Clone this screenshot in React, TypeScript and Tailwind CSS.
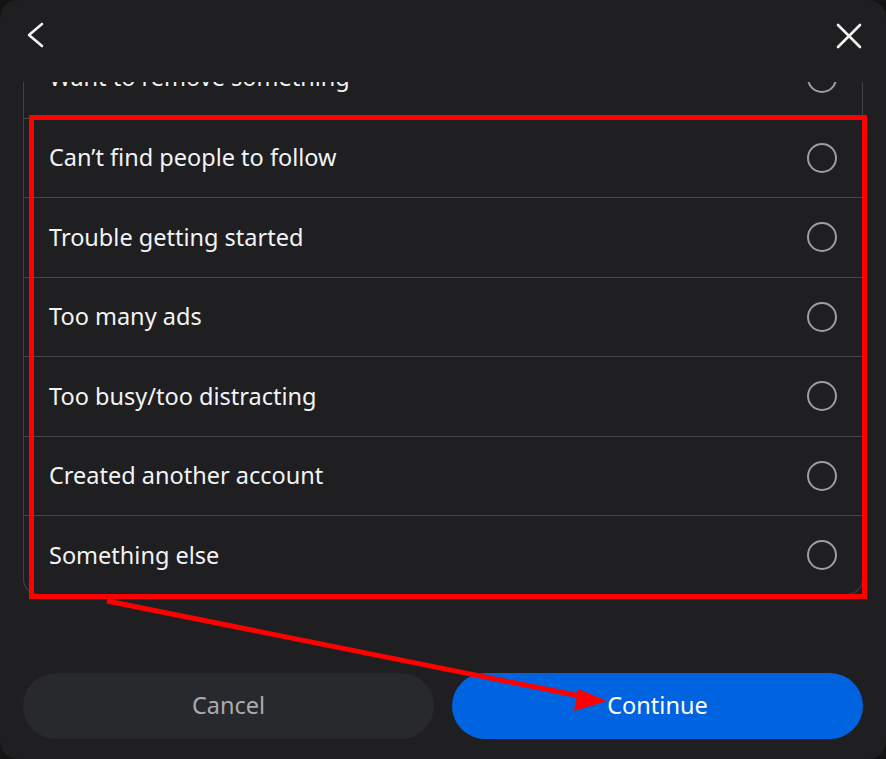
import React from 'react';

const reasons = [
  'Want to remove something',
  'Can’t find people to follow',
  'Trouble getting started',
  'Too many ads',
  'Too busy/too distracting',
  'Created another account',
  'Something else',
];

function Radio() {
  return <span className="block w-[30px] h-[30px] rounded-full border-[2.5px] border-[#9c9ea3] shrink-0" />;
}

export default function App() {
  return (
    <div className="w-[886px] h-[759px] bg-[#141415] relative overflow-hidden" style={{ fontFamily: '"Noto Sans", "Open Sans", sans-serif' }}>
      <div className="w-full h-full bg-[#1f1f21] rounded-[18px] flex flex-col">
        {/* header */}
        <div className="h-[72px] shrink-0 flex items-center justify-between px-[24px]">
          <button className="w-[24px] h-[24px] flex items-center justify-center">
            <svg width="24" height="28" viewBox="0 0 24 28" fill="none" stroke="#f2f2f2" strokeWidth="2.6" strokeLinecap="round" strokeLinejoin="round">
              <path d="M18 2 L5 13 L18 24" />
            </svg>
          </button>
          <button className="w-[26px] h-[26px] flex items-center justify-center">
            <svg width="26" height="26" viewBox="0 0 26 26" fill="none" stroke="#f2f2f2" strokeWidth="2.6" strokeLinecap="round">
              <path d="M2 2 L24 24 M24 2 L2 24" />
            </svg>
          </button>
        </div>

        {/* list, scrolled so the first reason is mostly hidden */}
        <div className="mt-[10px] mx-[23px] h-[513px] overflow-hidden border-x border-b border-[#3f4146] rounded-b-[16px]">
          <div className="-mt-[44px]">
            {reasons.map((r, i) => (
              <div
                key={r}
                className={`h-[79.5px] flex items-center justify-between pl-[25px] pr-[25px] ${i > 0 ? 'border-t border-[#45474c]' : ''}`}
              >
                <span className="text-[23.5px] text-[#f2f3f5] leading-none">{r}</span>
                <Radio />
              </div>
            ))}
          </div>
        </div>

        {/* buttons */}
        <div className="mt-[78px] px-[23px] flex gap-[18px]">
          <button className="w-[411px] h-[66px] rounded-full bg-[#28292d] text-[23.5px] text-[#a9acb1]">Cancel</button>
          <button className="w-[411px] h-[66px] rounded-full bg-[#0064e0] text-[23.5px] text-white">Continue</button>
        </div>
      </div>

      {/* annotation overlay */}
      <div className="absolute left-[29px] top-[115px] w-[838px] h-[484px] border-[5px] border-[#ff0000] pointer-events-none" />
      <svg className="absolute left-0 top-0 pointer-events-none" width="886" height="759">
        <line x1="107" y1="601" x2="585" y2="697" stroke="#ff0000" strokeWidth="5" />
        <polygon points="607,701 578,689 574,711" fill="#ff0000" />
      </svg>
    </div>
  );
}
